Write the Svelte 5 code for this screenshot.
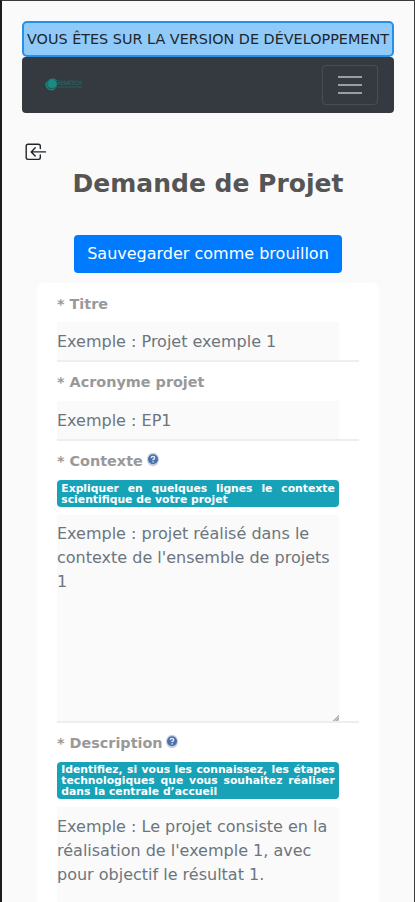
<script>
  const fields = [
    { id: 'titre', label: 'Titre', example: 'Exemple : Projet exemple 1' },
    { id: 'acronyme', label: 'Acronyme projet', example: 'Exemple : EP1' },
    {
      id: 'contexte',
      label: 'Contexte',
      hint: 'Expliquer en quelques lignes le contexte scientifique de votre projet',
      example: "Exemple : projet réalisé dans le contexte de l'ensemble de projets 1",
      long: true
    },
    {
      id: 'description',
      label: 'Description',
      hint: 'Identifiez, si vous les connaissez, les étapes technologiques que vous souhaitez réaliser dans la centrale d’accueil',
      example: "Exemple : Le projet consiste en la réalisation de l'exemple 1, avec pour objectif le résultat 1.",
      long: true
    }
  ];
</script>

<div class="page">
  <div class="banner">VOUS ÊTES SUR LA VERSION DE DÉVELOPPEMENT</div>
  <nav class="navbar">
    <svg class="logo" width="40" height="14" viewBox="0 0 40 14" aria-label="Renatech">
      <circle cx="7.3" cy="7" r="5.8" fill="#1c6b68" />
      <circle cx="8.2" cy="6" r="4.6" fill="#1c8a80" />
      <path d="M2.2 4.5C1 9 4.5 12.7 10 11.5M5 2Q9-.5 13 2.5" fill="none" stroke="#168a80" />
      <path d="M4 9.5Q7 12 11.5 9.5" fill="none" stroke="#30454b" stroke-width=".7" />
      <text x="13" y="7.4" textLength="25" lengthAdjust="spacingAndGlyphs" fill="#1d7773" font-size="6">RENATECH</text>
      <path d="M13.5 9H38" stroke="#216764" stroke-width=".8" />
    </svg>
    <button class="toggler" aria-label="Menu">
      <svg width="30" height="30" viewBox="0 0 30 30"><path d="M3 7h24M3 15h24M3 23h24" stroke="rgba(255,255,255,.5)" stroke-width="2" stroke-miterlimit="10" /></svg>
    </button>
  </nav>

  <div class="back">
    <svg width="22" height="18" viewBox="0 0 22 18" fill="none" stroke="#212529" stroke-width="1.4" stroke-linecap="round" stroke-linejoin="round">
      <path d="M15.3 5.5V3Q15.3 1.2 13.5 1.2H3Q1.2 1.2 1.2 3V14.6Q1.2 16.4 3 16.4H13.5Q15.3 16.4 15.3 14.6V12" />
      <path d="M20.5 8.9H6.5M10.2 4.8L6.2 8.9L10.2 13" />
    </svg>
  </div>
  <h1>Demande de Projet</h1>
  <button class="save">Sauvegarder comme brouillon</button>

  <form class="card">
    {#each fields as field}
      <div class="field">
        <label for={field.id}>
          <span>* {field.label}</span>
          {#if field.hint}
            <svg class="help" width="14" height="15" viewBox="0 0 14 15">
              <ellipse cx="7" cy="7.5" rx="6" ry="6.7" fill="#c8d0df" />
              <circle cx="7" cy="7.3" r="5" fill="#4b70ae" />
              <path d="M5.3 6Q5.3 4.4 7 4.4T8.7 5.9Q8.7 6.8 7.1 7.5V8.3M7.1 9.2V10.5" fill="none" stroke="#e8edf5" stroke-width="1.4" />
            </svg>
          {/if}
        </label>
        {#if field.hint}<div class="hint">{field.hint}</div>{/if}
        {#if field.long}
          <div class="area">
            <textarea id={field.id} placeholder={field.example}></textarea>
            <svg class="grip" width="6" height="6" viewBox="0 0 6 6"><path d="M6 0V6H0Z" fill="#c5c5c5" /><path d="M0 6L6 0M3 6L6 3" stroke="#999" stroke-width=".7" /></svg>
          </div>
        {:else}
          <input id={field.id} type="text" placeholder={field.example} />
        {/if}
      </div>
    {/each}
  </form>
</div>

<style>
  .page {
    box-sizing: border-box;
    height: 902px;
    overflow: hidden;
    padding: 20px 20px 0;
    border: solid #38383d;
    border-width: 1px 1px 0 2px;
    border-left-color: #1c1b20;
    background: #fafafa;
    color: #212529;
    font: 16px/1.5 "DejaVu Sans", sans-serif;
    display: flex;
    flex-direction: column;
  }
  .page :global(*) { box-sizing: border-box; }
  .banner {
    flex: none;
    height: 36px;
    width: 372px;
    border: 2px solid #2490eb;
    border-radius: 5px;
    background: #90caf9;
    font-size: 14.4px;
    line-height: 32px;
    text-align: center;
    white-space: nowrap;
  }
  .navbar {
    flex: none;
    width: 372px;
    height: 56px;
    padding: 0 16px 0 22px;
    border-radius: 4px;
    background: #343a40;
    display: flex;
    align-items: center;
    justify-content: space-between;
  }
  .logo { overflow: visible; }
  .toggler {
    width: 56px;
    height: 40px;
    padding: 0;
    border: 1px solid rgba(255, 255, 255, .1);
    border-radius: 4px;
    background: none;
    display: grid;
    place-items: center;
  }
  .back { flex: none; height: 18px; margin: 30px 0 0 3px; line-height: 0; }
  h1 {
    flex: none;
    margin: 5px 0 0;
    width: 372px;
    font-size: 25px;
    line-height: 36px;
    text-align: center;
    color: #555;
  }
  .save {
    flex: none;
    width: 268px;
    height: 38px;
    margin: 33px 0 10px 52px;
    padding: 0;
    border: 0;
    border-radius: 4px;
    background: #007bff;
    color: #fff;
    font: inherit;
  }
  .card {
    flex: none;
    width: 342px;
    margin-left: 15px;
    padding: 0 20px;
    border-radius: 8px;
    background: #fff;
  }
  .field { border-bottom: 2px solid #eee; }
  label {
    display: flex;
    height: 39px;
    padding-top: 9px;
    gap: 3px;
    font-size: 14.4px;
    font-weight: 700;
    line-height: 22px;
    color: #999;
  }
  .field:first-child label { padding-top: 10px; }
  .help { margin: 2px 0 0 -.2px; }
  .hint {
    width: 282px;
    margin-bottom: 8px;
    padding: 3.8px 4.3px 1.2px;
    border-radius: 4px;
    background: #17a2b8;
    color: #fff;
    font-size: 10.8px;
    font-weight: 700;
    line-height: 1;
    text-align: justify;
  }
  input, textarea {
    display: block;
    width: 282px;
    margin: 0;
    border: 0;
    border-radius: 0;
    background: #fafafa;
    font: inherit;
    outline: 0;
  }
  input { height: 38px; padding: 0; }
  .area { position: relative; width: 282px; }
  .grip { position: absolute; right: 0; bottom: 0; }
  textarea { height: 206px; padding: 7.7px 0 0; overflow: hidden; resize: none; }
  input::placeholder, textarea::placeholder { color: #6c757d; opacity: 1; }
</style>
